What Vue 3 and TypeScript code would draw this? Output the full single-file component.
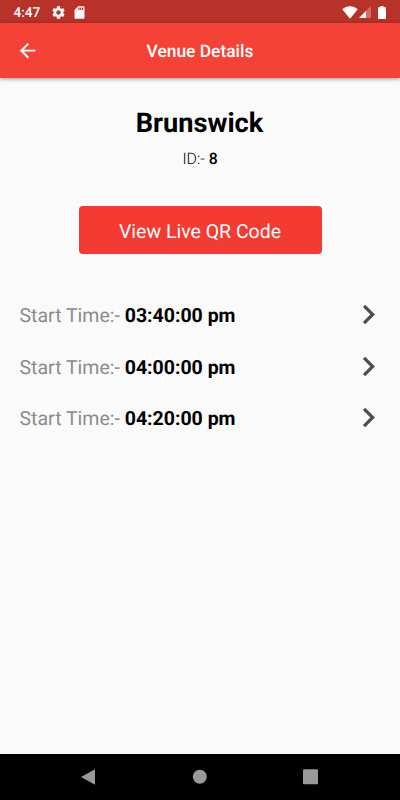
<script setup lang="ts">
interface Session {
  id: number
  start: string
}

const venue = { name: 'Brunswick', id: 8 }
const sessions: Session[] = [
  { id: 1, start: '03:40:00 pm' },
  { id: 2, start: '04:00:00 pm' },
  { id: 3, start: '04:20:00 pm' },
]
</script>

<template>
  <div class="screen">
    <div class="status">
      <span class="clock">4:47</span>
      <svg class="gear" viewBox="0 0 24 24"><path d="M19.43 12.98c.04-.32.07-.64.07-.98s-.03-.66-.07-.98l2.11-1.65c.19-.15.24-.42.12-.64l-2-3.46c-.12-.22-.39-.3-.61-.22l-2.49 1c-.52-.4-1.08-.73-1.69-.98l-.38-2.65C14.46 2.18 14.25 2 14 2h-4c-.25 0-.46.18-.49.42l-.38 2.65c-.61.25-1.17.59-1.69.98l-2.49-1c-.23-.09-.49 0-.61.22l-2 3.46c-.13.22-.07.49.12.64l2.11 1.65c-.04.32-.07.65-.07.98s.03.66.07.98l-2.11 1.65c-.19.15-.24.42-.12.64l2 3.46c.12.22.39.3.61.22l2.49-1c.52.4 1.08.73 1.69.98l.38 2.65c.03.24.24.42.49.42h4c.25 0 .46-.18.49-.42l.38-2.65c.61-.25 1.17-.59 1.69-.98l2.49 1c.23.09.49 0 .61-.22l2-3.46c.12-.22.07-.49-.12-.64l-2.11-1.65zM12 15.5c-1.93 0-3.5-1.57-3.5-3.5s1.57-3.5 3.5-3.5 3.5 1.57 3.5 3.5-1.57 3.5-3.5 3.5z" /></svg>
      <svg class="card" viewBox="0 0 24 24"><path d="M18 2h-8L4.02 8 4 20c0 1.1.9 2 2 2h12c1.1 0 2-.9 2-2V4c0-1.1-.9-2-2-2zm-6 6h-2V4h2v4zm3 0h-2V4h2v4zm3 0h-2V4h2v4z" /></svg>
      <span class="fill"></span>
      <svg class="wifi" viewBox="0 0 16 13"><path d="M8 12.8.3 3.3C2.5 1.2 5.2.2 8 .2s5.5 1 7.7 3.1z" /></svg>
      <svg class="signal" viewBox="0 0 12 12"><path class="dim" d="M0 12 12 0v12z" /><path d="M0 12 7 5v7z" /></svg>
      <svg class="battery" viewBox="0 0 8 13"><path d="M2.4 0h3.2v1.3h1.7q.7 0 .7.7v10.3q0 .7-.7.7H.7q-.7 0-.7-.7V2q0-.7.7-.7h1.7z" /></svg>
    </div>

    <header class="appbar">
      <svg class="back" viewBox="0 0 24 24"><path d="M20 11H7.83l5.59-5.59L12 4l-8 8 8 8 1.41-1.41L7.83 13H20v-2z" /></svg>
      <h1 class="title">Venue Details</h1>
    </header>

    <main class="content">
      <h2 class="venue">{{ venue.name }}</h2>
      <p class="venue-id">ID:- <span class="number">{{ venue.id }}</span></p>
      <button class="qr" type="button">View Live QR Code</button>
      <ul class="sessions">
        <li v-for="session in sessions" :key="session.id" class="session">
          <span class="label">Start Time:-</span>
          <span class="time">{{ session.start }}</span>
          <svg class="chevron" viewBox="0 0 24 24"><path d="M10 6 8.59 7.41 13.17 12l-4.58 4.59L10 18l6-6z" /></svg>
        </li>
      </ul>
    </main>

    <nav class="navbar">
      <svg viewBox="0 0 16 16"><path d="M1 8 15 .2v15.6z" /></svg>
      <svg viewBox="0 0 16 16"><circle cx="7.8" cy="7.8" r="7" /></svg>
      <svg viewBox="0 0 16 16"><rect x="0" y=".2" width="15" height="15" rx="1" /></svg>
    </nav>
  </div>
</template>

<style>
body {
  margin: 0;
}
</style>

<style scoped>
.screen {
  display: flex;
  flex-direction: column;
  width: 400px;
  height: 800px;
  overflow: hidden;
  background: #fafafa;
  color: #000;
  font-family: Roboto, sans-serif;
  text-rendering: geometricPrecision;
}
svg {
  display: block;
  flex: none;
  fill: currentColor;
}
.status {
  display: flex;
  align-items: center;
  box-sizing: border-box;
  height: 23px;
  padding: 1px 14px 0 13.5px;
  background: #b73229;
  color: #fff;
}
.clock {
  width: 37px;
  padding-top: 1px;
  font-size: 13.6px;
  font-weight: 500;
  line-height: 22px;
}
.gear {
  width: 15px;
  height: 15px;
}
.card {
  width: 15px;
  height: 15px;
  margin-left: 6.5px;
}
.fill {
  flex: 1;
}
.wifi {
  width: 16px;
  height: 13px;
}
.signal {
  width: 12px;
  height: 12px;
  margin-left: 1px;
}
.dim {
  opacity: 0.3;
}
.battery {
  width: 8px;
  height: 13px;
  margin-left: 7px;
}
.appbar {
  display: grid;
  grid-template-columns: 54px 1fr 54px;
  align-items: center;
  height: 54.5px;
  background: #f44336;
  color: #fff;
  box-shadow: 0 1px 4px rgba(0, 0, 0, 0.4);
}
.back {
  width: 23.3px;
  height: 23.3px;
  margin-left: 15.5px;
}
.title {
  margin: 0;
  padding-top: 3px;
  font-size: 17.4px;
  font-weight: 500;
  line-height: 24px;
  text-align: center;
}
.content {
  flex: 1;
  display: flex;
  flex-direction: column;
  align-items: center;
  padding-top: 29.5px;
}
.venue {
  margin: 0;
  padding-right: 1px;
  font-size: 27.2px;
  font-weight: 700;
  line-height: 32px;
}
.venue-id {
  margin: 10.6px 0 0;
  font-size: 15.8px;
  font-weight: 300;
  line-height: 18px;
}
.number {
  font-weight: 500;
}
.qr {
  width: 243px;
  height: 48.5px;
  margin: 38.4px 0 0;
  padding: 3px 0 0;
  border: 0;
  border-radius: 4px;
  background: #f33a33;
  color: #fff;
  font: 400 19.5px/46px Roboto, sans-serif;
  text-rendering: inherit;
}
.sessions {
  align-self: stretch;
  margin: 34px 0 0;
  padding: 0 11.7px 0 19.5px;
  list-style: none;
}
.session {
  display: flex;
  align-items: center;
  height: 51.7px;
  font-size: 19.5px;
  line-height: 24px;
}
.label {
  width: 105.2px;
  padding-top: 3px;
  color: #8b8b8b;
}
.time {
  flex: 1;
  padding-top: 3px;
  font-weight: 700;
}
.chevron {
  width: 38.9px;
  height: 38.9px;
  color: #4d4d4d;
}
.navbar {
  display: flex;
  align-items: center;
  justify-content: space-between;
  box-sizing: border-box;
  height: 46.5px;
  padding: 0 81px 0 80px;
  background: #000;
  color: #999;
}
.navbar svg {
  width: 16px;
  height: 16px;
}
</style>
